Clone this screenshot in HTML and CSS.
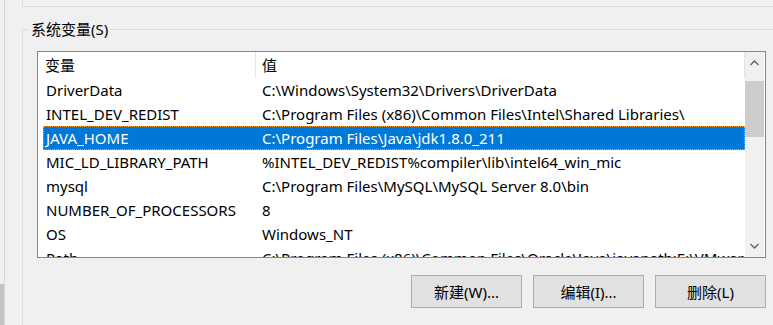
FILE: index.html
```html
<!DOCTYPE html>
<html>

<head>
  <meta charset="UTF-8">
  <meta name="viewport" content="width=device-width, initial-scale=1.0">
  <link rel="stylesheet" href="styles.css">
</head>

<body>
  <div class="window">
    <div class="side">
      <div class="side-grip"></div>
    </div>

    <div class="main">
      <!-- final del grupo de variables de usuario -->
      <div class="group-top"></div>

      <fieldset class="group">
        <legend>系统变量(S)</legend>

        <div class="listbox">
          <div class="list">
            <div class="list-head">
              <div class="head-cell">变量</div>
              <div class="head-cell">值</div>
            </div>
            <div class="rows">
              <div class="row"><span>DriverData</span><span>C:\Windows\System32\Drivers\DriverData</span></div>
              <div class="row"><span>INTEL_DEV_REDIST</span><span>C:\Program Files (x86)\Common Files\Intel\Shared Libraries\</span></div>
              <div class="row selected"><span>JAVA_HOME</span><span>C:\Program Files\Java\jdk1.8.0_211</span></div>
              <div class="row"><span>MIC_LD_LIBRARY_PATH</span><span>%INTEL_DEV_REDIST%compiler\lib\intel64_win_mic</span></div>
              <div class="row"><span>mysql</span><span>C:\Program Files\MySQL\MySQL Server 8.0\bin</span></div>
              <div class="row"><span>NUMBER_OF_PROCESSORS</span><span>8</span></div>
              <div class="row"><span>OS</span><span>Windows_NT</span></div>
              <div class="row"><span>Path</span><span>C:\Program Files (x86)\Common Files\Oracle\Java\javapath;E:\VMware\bin</span></div>
            </div>
          </div>

          <div class="scrollbar">
            <div class="arrow">
              <svg width="9" height="6" viewBox="0 0 9 6"><polyline points="0.5,5 4.5,1 8.5,5" fill="none" stroke="#606060" stroke-width="1.3"/></svg>
            </div>
            <div class="thumb"></div>
            <div class="track"></div>
            <div class="arrow">
              <svg width="9" height="6" viewBox="0 0 9 6"><polyline points="0.5,1 4.5,5 8.5,1" fill="none" stroke="#606060" stroke-width="1.3"/></svg>
            </div>
          </div>
        </div>

        <div class="buttons">
          <button class="btn">新建(W)...</button>
          <button class="btn">编辑(I)...</button>
          <button class="btn">删除(L)</button>
        </div>
      </fieldset>
    </div>
  </div>
</body>

</html>
```

FILE: styles.css
```css
/* Ventana base */
body {
  margin: 0;
  background-color: #f0f0f0;
  font-family: "Noto Sans", "Noto Sans CJK SC", sans-serif;
  font-size: 15px;
  color: #000;
  overflow: hidden;
}

.window {
  display: flex;
  width: 773px;
  height: 325px;
  overflow: hidden;
}

.side {
  width: 4px;
  border-right: 1px solid #d6d6d6;
  display: flex;
  flex-direction: column;
  justify-content: flex-end;
}

.side-grip {
  height: 41px;
  background-color: #c4c4c4;
  border-top: 1px solid #e6e6e6;
}

.main {
  flex: 1;
  padding-left: 17px;
}

/* Grupos */
.group-top {
  height: 6px;
  border-left: 1px solid #dcdcdc;
  border-bottom: 1px solid #dcdcdc;
  margin-right: -20px;
}

.group {
  margin: 12px -20px 0 0;
  padding: 12px 0 0 14px;
  border: 1px solid #dcdcdc;
  border-right: none;
  height: 320px;
}

.group legend {
  margin-left: -8px;
  padding: 0 2px;
  line-height: 20px;
}

/* Lista */
.listbox {
  width: 727px;
  height: 205px;
  border: 1px solid #828790;
  background-color: #fff;
  display: flex;
}

.list {
  flex: 1;
  overflow: hidden;
}

.list-head {
  display: grid;
  grid-template-columns: 217px 1fr;
  height: 26px;
  border-right: 1px solid #e5e5e5;
}

.head-cell {
  padding-left: 7px;
  line-height: 26px;
}

.head-cell + .head-cell {
  border-left: 1px solid #e5e5e5;
  padding-left: 6px;
}

.rows {
  margin-left: 5px;
}

.row {
  display: grid;
  grid-template-columns: 212px 1fr;
  height: 24px;
  line-height: 24px;
  white-space: nowrap;
}

.row span {
  padding-left: 3px;
  overflow: hidden;
}

.row span + span {
  padding-left: 7px;
}

.row.selected {
  background-color: #0078d7;
  color: #fff;
  outline: 1px dotted #f39c3a;
  outline-offset: -1px;
}

/* Barra de desplazamiento */
.scrollbar {
  width: 19px;
  margin-right: 1px;
  background-color: #f0f0f0;
  display: flex;
  flex-direction: column;
}

.arrow {
  height: 22px;
  display: flex;
  align-items: center;
  justify-content: center;
}

.thumb {
  height: 56px;
  margin-top: 7px;
  background-color: #cdcdcd;
}

.track {
  flex: 1;
}

/* Botones */
.buttons {
  width: 729px;
  display: flex;
  justify-content: flex-end;
  gap: 11px;
  margin-top: 17px;
}

.btn {
  width: 111px;
  height: 33px;
  background-color: #e1e1e1;
  border: 1px solid #adadad;
  font-family: "Noto Sans", "Noto Sans CJK SC", sans-serif;
  font-size: 15px;
  color: #000;
  padding: 0;
}
```
